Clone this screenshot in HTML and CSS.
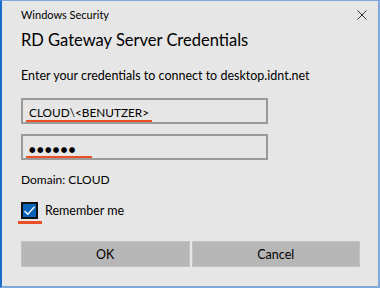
FILE: index.html
```html
<!DOCTYPE html>
<html lang="en">
<head>
    <meta charset="UTF-8">
    <title>Windows Security</title>
    <link rel="stylesheet" href="styles.css">
</head>
<body>
    <div class="dialog">
        <div class="titlebar">
            <span class="app-name">Windows Security</span>
            <svg class="close" width="10" height="10" viewBox="0 0 10 10">
                <path d="M0.5 0.5 L9.5 9.5 M9.5 0.5 L0.5 9.5" stroke="#333" stroke-width="1" fill="none"/>
            </svg>
        </div>

        <h1 class="heading">RD Gateway Server Credentials</h1>
        <p class="intro">Enter your credentials to connect to desktop.idnt.net</p>

        <div class="field">
            <span class="mark">CLOUD\&lt;BENUTZER&gt;</span>
        </div>
        <div class="field field-pass">
            <span class="mark mark-pass">●●●●●●</span>
        </div>

        <p class="domain">Domain: CLOUD</p>

        <label class="remember">
            <span class="check-wrap">
                <span class="checkbox">
                    <svg width="13" height="13" viewBox="0 0 13 13">
                        <path d="M1.5 7 L4.8 10.3 L11.5 2.8" stroke="#fff" stroke-width="1.3" fill="none"/>
                    </svg>
                </span>
            </span>
            <span class="remember-text">Remember me</span>
        </label>

        <div class="buttons">
            <button class="btn">OK</button>
            <button class="btn">Cancel</button>
        </div>
    </div>
</body>
</html>
```

FILE: styles.css
```css
:root {
    --bg-color: #e6e6e6;
    --accent-dark: #1a6ccc;
    --accent-light: #7ea9d9;
    --field-border: #9a9a9a;
    --button-bg: #b7b7b7;
    --mark-color: #ea4f26;
}

* {
    margin: 0;
    padding: 0;
    box-sizing: border-box;
}

body {
    font-family: Lato, 'Noto Sans', sans-serif;
    background-color: var(--bg-color);
    color: #000;
}

.dialog {
    width: 380px;
    height: 288px;
    background-color: var(--bg-color);
    border-top: 1px solid var(--accent-light);
    border-left: 2px solid var(--accent-dark);
    border-right: 2px solid var(--accent-light);
    border-bottom: 2px solid var(--accent-light);
    padding: 0 18px 0 19px;
    display: flex;
    flex-direction: column;
}

.titlebar {
    display: flex;
    justify-content: space-between;
    align-items: center;
    height: 27px;
}

.app-name {
    font-size: 11px;
    line-height: 14px;
}

.close {
    margin-right: -7px;
}

/* Заголовок окна */
.heading {
    font-size: 16.5px;
    font-weight: 400;
    line-height: 24px;
}

.intro {
    font-size: 12.5px;
    line-height: 20px;
    margin-top: 14px;
}

.field {
    width: 247px;
    height: 26px;
    border: 2px solid var(--field-border);
    margin-top: 12px;
    padding-left: 3px;
    font-size: 11.8px;
    display: flex;
    align-items: flex-start;
}

.field-pass {
    margin-top: 10px;
}

.mark {
    display: inline-block;
    padding: 5px 3px 0;
    line-height: 15px;
    border-bottom: 2px solid var(--mark-color);
}

.mark-pass {
    font-family: 'DejaVu Sans', sans-serif;
    font-size: 7.5px;
    letter-spacing: 1.4px;
    line-height: 12px;
    padding: 8px 15px 0 3px;
}

.domain {
    font-size: 12px;
    line-height: 20px;
    margin-top: 10px;
}

.remember {
    display: flex;
    align-items: flex-start;
    margin-top: 12px;
}

.check-wrap {
    padding: 0 4px 2px 3px;
    margin-left: -3px;
    border-bottom: 3px solid var(--mark-color);
}

.checkbox {
    display: flex;
    width: 17px;
    height: 17px;
    background-color: #0a63b8;
    border: 2px solid #111;
    align-items: center;
    justify-content: center;
}

.remember-text {
    font-size: 12.5px;
    line-height: 17px;
    margin-left: 3px;
}

.buttons {
    display: grid;
    grid-template-columns: 1fr 1fr;
    gap: 2px;
    margin-top: 17px;
    width: 339px;
}

.btn {
    font-family: inherit;
    font-size: 12.5px;
    height: 26px;
    background-color: var(--button-bg);
    border: 1px solid #c2c2c2;
    color: #000;
}
```
